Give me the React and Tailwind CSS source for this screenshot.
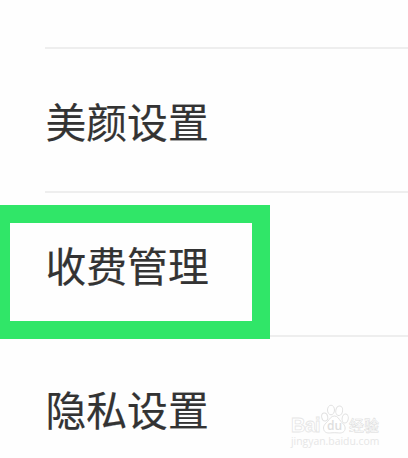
import React from 'react';

const items = ['美颜设置', '收费管理', '隐私设置'];

function SettingRow({ label }) {
  return (
    <li className="flex h-[144px] items-center border-t-2 border-[#eeeeee] pt-[3px] pl-[0.5px]">
      <span className="whitespace-nowrap text-[40.8px] leading-none text-[#333333] [-webkit-text-stroke:0.2px_#333333]">
        {label}
      </span>
    </li>
  );
}

function PawLogo() {
  return (
    <svg
      className="-mx-px h-[32px] w-[30px] shrink-0"
      viewBox="0 0 30 32"
      fill="#ffffff"
      stroke="#e2e2e2"
      strokeWidth="1"
    >
      <ellipse cx="4.7" cy="14" rx="3" ry="4" transform="rotate(-12 4.7 14)" />
      <ellipse cx="11" cy="7" rx="3.5" ry="4.8" />
      <ellipse cx="19.2" cy="7.7" rx="3.4" ry="4.8" transform="rotate(10 19.2 7.7)" />
      <ellipse cx="25.2" cy="15.5" rx="3.1" ry="4.5" transform="rotate(8 25.2 15.5)" />
      <path d="M14.5 13c-3.5 0-4.7 3-6.8 5.3-2.2 2.4-4.9 4.3-4 8 .8 3.5 3.9 3.9 6.6 3.6 2.6-.3 5.4-.3 8 0 2.8.3 5.9-.1 6.7-3.6.8-3.6-2-5.6-4.2-8-2-2.2-2.9-5.3-6.3-5.3Z" />
      <text
        x="14.5"
        y="27"
        textAnchor="middle"
        fontFamily="Open Sans, sans-serif"
        fontSize="12"
        fontWeight="600"
        fill="#dedede"
        stroke="none"
      >
        du
      </text>
    </svg>
  );
}

function Watermark() {
  return (
    <div className="absolute right-[20px] bottom-[10px] flex w-[98px] flex-col font-['Liberation_Sans',sans-serif] leading-none text-white">
      <div className="flex items-end">
        <span className="w-[31px] pl-px text-[20px] leading-none font-bold tracking-[-0.8px] [-webkit-text-stroke:0.8px_#e6e6e6]">
          Bai
        </span>
        <PawLogo />
        <span className="mb-[3px] whitespace-nowrap font-['Noto_Sans_CJK_SC',sans-serif] text-[15px] leading-none font-medium [-webkit-text-stroke:0.5px_#dadada]">
          经验
        </span>
      </div>
      <span className="whitespace-nowrap pl-px font-['Open_Sans',sans-serif] text-[10.4px] leading-[13px] text-[#e6e6e6]">
        jingyan.baidu.com
      </span>
    </div>
  );
}

export default function App() {
  return (
    <main className="relative h-[458px] w-[408px] overflow-hidden bg-[#fefefe] font-['Noto_Sans_CJK_SC',sans-serif]">
      <ul className="ml-[45px] pt-[47px]">
        {items.map((label) => (
          <SettingRow key={label} label={label} />
        ))}
      </ul>

      {/* Highlight frame around the second row */}
      <div className="absolute left-0 top-[205px] h-[134px] w-[270px] border-b-[18px] border-l-[10px] border-r-[18px] border-t-[18px] border-[#30e668]" />

      <Watermark />
    </main>
  );
}
